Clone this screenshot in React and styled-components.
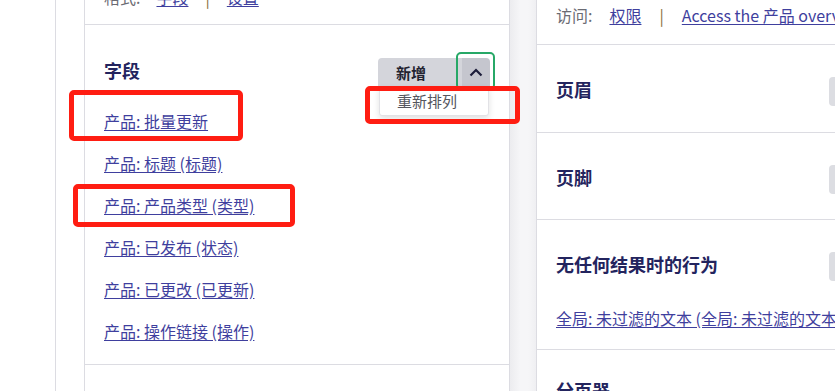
import React from 'react';
import styled, { createGlobalStyle } from 'styled-components';

const GlobalStyle = createGlobalStyle`
  html, body {
    margin: 0;
    padding: 0;
    background: #ffffff;
    overflow: hidden;
  }
  body {
    font-family: "Noto Sans CJK SC", "Noto Sans", sans-serif;
    color: #232429;
  }
`;

const Page = styled.div`
  position: relative;
  width: 835px;
  height: 391px;
  display: flex;
  overflow: hidden;
  background: #ffffff;
`;

const Rail = styled.div`
  width: 55px;
  flex: none;
  border-right: 1px solid #dcdce2;
`;

const Spacer = styled.div`
  width: 28px;
  flex: none;
`;

const Panel = styled.div`
  flex: ${(p) => (p.$grow ? '1' : 'none')};
  width: ${(p) => (p.$grow ? 'auto' : '424px')};
  border-left: 1px solid #dcdce2;
  border-right: ${(p) => (p.$grow ? 'none' : '1px solid #dcdce2')};
  background: #ffffff;
  display: flex;
  flex-direction: column;
  min-width: 0;
`;

const Gutter = styled.div`
  width: 26px;
  flex: none;
  background: linear-gradient(90deg, #ececef 0%, #f6f6f8 40%, #f6f6f8 70%, #efeff2 100%);
`;

const Section = styled.div`
  position: relative;
  padding: ${(p) => p.$pad || '0 19px'};
  height: ${(p) => p.$h}px;
  flex: none;
  border-bottom: ${(p) => (p.$last ? 'none' : '1px solid #dcdce2')};
  box-sizing: border-box;
  overflow: ${(p) => (p.$clip ? 'hidden' : 'visible')};
`;

const InfoLine = styled.div`
  display: flex;
  align-items: center;
  gap: ${(p) => p.$gap ?? 16}px;
  font-size: 16px;
  line-height: 20px;
  color: #6b6b73;
  white-space: nowrap;
  margin-top: ${(p) => p.$top}px;
`;

const Sep = styled.span`
  color: #8a6f3a;
  margin: 0 1px;
`;

const Link = styled.a`
  color: #3f3f9e;
  text-decoration: underline;
  text-underline-offset: 2px;
  font-size: 16px;
  cursor: pointer;
`;

const HeadRow = styled.div`
  display: flex;
  align-items: center;
  justify-content: space-between;
  height: 28px;
  margin-top: ${(p) => p.$top}px;
`;

const Heading = styled.h3`
  margin: 0 0 3px;
  font-size: 18px;
  font-weight: 700;
  color: #23245e;
  line-height: 25px;
  white-space: nowrap;
`;

const FieldList = styled.ul`
  list-style: none;
  margin: 24px 0 0;
  padding: 0;
  display: flex;
  flex-direction: column;
  gap: 20px;
`;

const FieldItem = styled.li`
  line-height: 22px;
`;

const SplitButton = styled.div`
  position: relative;
  display: flex;
`;

const MainButton = styled.button`
  width: 84px;
  height: 28px;
  border: none;
  border-radius: 4px 0 0 0;
  background: #d4d5db;
  color: #222330;
  font-family: inherit;
  font-size: 15px;
  font-weight: 700;
  text-align: left;
  padding: 0 0 0 18px;
`;

const ToggleButton = styled.button`
  position: relative;
  width: 28px;
  height: 28px;
  border: none;
  border-radius: 0 4px 0 0;
  background: #c5c6ce;
  display: flex;
  align-items: center;
  justify-content: center;
  padding: 0;
  &::after {
    content: '';
    position: absolute;
    left: -6px;
    top: -6px;
    right: -5px;
    bottom: -4px;
    border: 2px solid #27a867;
    border-radius: 5px;
    pointer-events: none;
  }
`;

const Menu = styled.div`
  position: absolute;
  left: 1px;
  top: 28px;
  width: 110px;
  height: 30px;
  background: #ffffff;
  border: 1px solid #e2e2e6;
  border-radius: 0 0 3px 3px;
  box-shadow: 0 3px 6px rgba(0, 0, 0, 0.12);
  box-sizing: border-box;
  font-size: 15px;
  color: #55565e;
  padding-left: 17px;
  line-height: 28px;
  z-index: 2;
`;

const GrayTab = styled.div`
  width: 20px;
  height: 29px;
  margin-right: -14px;
  background: #dcdde2;
  border-radius: 4px;
  flex: none;
`;

const Mark = styled.div`
  position: absolute;
  border: 5px solid #ff1d12;
  border-radius: 5px;
  box-sizing: border-box;
  pointer-events: none;
  z-index: 5;
`;

const marks = [
  { left: 69, top: 90, width: 174, height: 51 },
  { left: 365, top: 86, width: 155, height: 38 },
  { left: 73, top: 184, width: 222, height: 43 },
];

const fields = [
  '产品: 批量更新',
  '产品: 标题 (标题)',
  '产品: 产品类型 (类型)',
  '产品: 已发布 (状态)',
  '产品: 已更改 (已更新)',
  '产品: 操作链接 (操作)',
];

const App = () => (
  <>
    <GlobalStyle />
    <Page>
      <Rail />
      <Spacer />
      <Panel>
        <Section $h={25}>
          <InfoLine $top={-13}>
            <span>格式:</span>
            <Link>字段</Link>
            <Sep>|</Sep>
            <Link>设置</Link>
          </InfoLine>
        </Section>
        <Section $h={340}>
          <HeadRow $top={33}>
            <Heading>字段</Heading>
            <SplitButton>
              <MainButton type="button">新增</MainButton>
              <ToggleButton type="button">
                <svg width="14" height="9" viewBox="0 0 14 9">
                  <path d="M1.5 7.5 L7 2 L12.5 7.5" fill="none" stroke="#1c1d3a" strokeWidth="2.2" />
                </svg>
              </ToggleButton>
              <Menu>重新排列</Menu>
            </SplitButton>
          </HeadRow>
          <FieldList>
            {fields.map((f) => (
              <FieldItem key={f}>
                <Link>{f}</Link>
              </FieldItem>
            ))}
          </FieldList>
        </Section>
        <Section $h={40} $last />
      </Panel>
      <Gutter />
      <Panel $grow>
        <Section $h={45}>
          <InfoLine $top={5} $gap={17}>
            <span>访问:</span>
            <Link>权限</Link>
            <Sep>|</Sep>
            <Link>Access the 产品 overview page</Link>
          </InfoLine>
        </Section>
        <Section $h={88} $pad="0 0 0 19px">
          <HeadRow $top={32}>
            <Heading>页眉</Heading>
            <GrayTab />
          </HeadRow>
        </Section>
        <Section $h={87} $pad="0 0 0 19px">
          <HeadRow $top={32}>
            <Heading>页脚</Heading>
            <GrayTab />
          </HeadRow>
        </Section>
        <Section $h={130} $pad="0 0 0 19px">
          <HeadRow $top={32}>
            <Heading>无任何结果时的行为</Heading>
            <GrayTab />
          </HeadRow>
          <InfoLine $top={28}>
            <Link>全局: 未过滤的文本 (全局: 未过滤的文本)</Link>
          </InfoLine>
        </Section>
        <Section $h={60} $pad="0 0 0 19px" $last>
          <HeadRow $top={28}>
            <Heading>分页器</Heading>
          </HeadRow>
        </Section>
      </Panel>
      {marks.map((m, i) => (
        <Mark key={i} style={{ left: m.left, top: m.top, width: m.width, height: m.height }} />
      ))}
    </Page>
  </>
);

export default App;
